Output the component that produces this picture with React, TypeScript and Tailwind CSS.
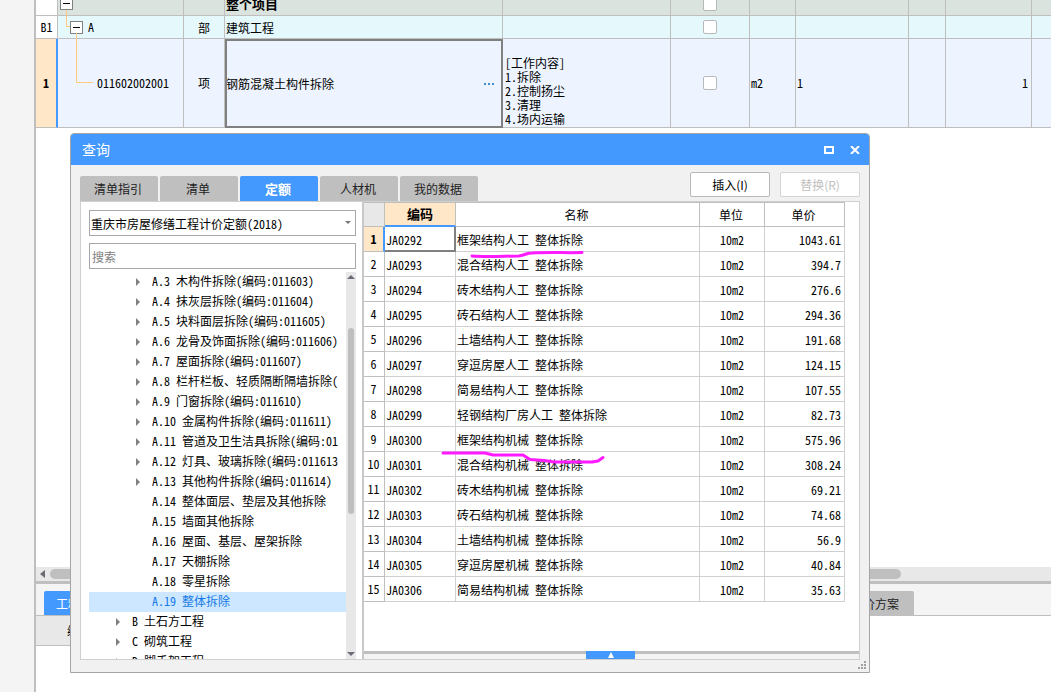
import { useState } from 'react';

interface TreeNode {
  code: string;
  name: string;
  level: number;
  leaf?: boolean;
}

interface Quota {
  code: string;
  name: string;
  unit: string;
  price: string;
}

const tabs = ['清单指引', '清单', '定额', '人材机', '我的数据'];

const treeNodes: TreeNode[] = [
  { code: 'A.3', name: '木构件拆除(编码:011603)', level: 2 },
  { code: 'A.4', name: '抹灰层拆除(编码:011604)', level: 2 },
  { code: 'A.5', name: '块料面层拆除(编码:011605)', level: 2 },
  { code: 'A.6', name: '龙骨及饰面拆除(编码:011606)', level: 2 },
  { code: 'A.7', name: '屋面拆除(编码:011607)', level: 2 },
  { code: 'A.8', name: '栏杆栏板、轻质隔断隔墙拆除(', level: 2 },
  { code: 'A.9', name: '门窗拆除(编码:011610)', level: 2 },
  { code: 'A.10', name: '金属构件拆除(编码:011611)', level: 2 },
  { code: 'A.11', name: '管道及卫生洁具拆除(编码:01', level: 2 },
  { code: 'A.12', name: '灯具、玻璃拆除(编码:011613', level: 2 },
  { code: 'A.13', name: '其他构件拆除(编码:011614)', level: 2 },
  { code: 'A.14', name: '整体面层、垫层及其他拆除', level: 2, leaf: true },
  { code: 'A.15', name: '墙面其他拆除', level: 2, leaf: true },
  { code: 'A.16', name: '屋面、基层、屋架拆除', level: 2, leaf: true },
  { code: 'A.17', name: '天棚拆除', level: 2, leaf: true },
  { code: 'A.18', name: '零星拆除', level: 2, leaf: true },
  { code: 'A.19', name: '整体拆除', level: 2, leaf: true },
  { code: 'B', name: '土石方工程', level: 1 },
  { code: 'C', name: '砌筑工程', level: 1 },
  { code: 'D', name: '脚手架工程', level: 1 },
];

const quotas: Quota[] = [
  { code: 'JA0292', name: '框架结构人工 整体拆除', unit: '10m2', price: '1043.61' },
  { code: 'JA0293', name: '混合结构人工 整体拆除', unit: '10m2', price: '394.7' },
  { code: 'JA0294', name: '砖木结构人工 整体拆除', unit: '10m2', price: '276.6' },
  { code: 'JA0295', name: '砖石结构人工 整体拆除', unit: '10m2', price: '294.36' },
  { code: 'JA0296', name: '土墙结构人工 整体拆除', unit: '10m2', price: '191.68' },
  { code: 'JA0297', name: '穿逗房屋人工 整体拆除', unit: '10m2', price: '124.15' },
  { code: 'JA0298', name: '简易结构人工 整体拆除', unit: '10m2', price: '107.55' },
  { code: 'JA0299', name: '轻钢结构厂房人工 整体拆除', unit: '10m2', price: '82.73' },
  { code: 'JA0300', name: '框架结构机械 整体拆除', unit: '10m2', price: '575.96' },
  { code: 'JA0301', name: '混合结构机械 整体拆除', unit: '10m2', price: '308.24' },
  { code: 'JA0302', name: '砖木结构机械 整体拆除', unit: '10m2', price: '69.21' },
  { code: 'JA0303', name: '砖石结构机械 整体拆除', unit: '10m2', price: '74.68' },
  { code: 'JA0304', name: '土墙结构机械 整体拆除', unit: '10m2', price: '56.9' },
  { code: 'JA0305', name: '穿逗房屋机械 整体拆除', unit: '10m2', price: '40.84' },
  { code: 'JA0306', name: '简易结构机械 整体拆除', unit: '10m2', price: '35.63' },
];

const workContent = ['[工作内容]', '1.拆除', '2.控制扬尘', '3.清理', '4.场内运输'];

const cell = 'border-r border-b border-[#bfbfbf] p-0';

const CheckBox = ({ label }: { label: string }) => (
  <input
    type="checkbox"
    aria-label={label}
    className="mx-auto block size-[14px] appearance-none rounded-xs border border-[#b8b8b8] bg-white checked:bg-[#4499ff]"
  />
);

const Toggle = () => (
  <button aria-label="折叠" className="flex size-[13px] items-center justify-center border border-[#808080] bg-white">
    <span className="h-px w-[7px] bg-black"></span>
  </button>
);

const ProjectTable = () => (
  <div className="relative overflow-hidden">
    <table className="-mt-2 w-full table-fixed border-separate border-spacing-0">
      <colgroup>
        <col className="w-[22px]" />
        <col className="w-[126px]" />
        <col className="w-[41px]" />
        <col className="w-[278px]" />
        <col className="w-[168px]" />
        <col className="w-[79px]" />
        <col className="w-[46px]" />
        <col className="w-[113px]" />
        <col className="w-[37px]" />
        <col className="w-[86px]" />
        <col />
      </colgroup>
      <tbody>
        <tr className="h-[24px] bg-[#dae3de]">
          <td className={`${cell} bg-white`}></td>
          <td className={cell}><div className="pl-[2px]"><Toggle /></div></td>
          <td className={cell}></td>
          <td className={`${cell} pt-px pl-px text-[13px] font-bold`}>整个项目</td>
          <td className={cell}></td>
          <td className={cell}><CheckBox label="整个项目" /></td>
          <td className={cell}></td>
          <td className={cell}></td>
          <td className={cell}></td>
          <td className={cell}></td>
          <td className="border-b border-[#bfbfbf]"></td>
        </tr>
        <tr className="h-[23px] bg-[#e5f8fc]">
          <td className={`${cell} bg-white text-center`}>B1</td>
          <td className={cell}><div className="flex items-center gap-[5px] pl-[12px]"><Toggle />A</div></td>
          <td className={`${cell} pt-[2px] text-center`}>部</td>
          <td className={`${cell} pt-[2px] pl-px`}>建筑工程</td>
          <td className={cell}></td>
          <td className={cell}><CheckBox label="建筑工程" /></td>
          <td className={cell}></td>
          <td className={cell}></td>
          <td className={cell}></td>
          <td className={cell}></td>
          <td className="border-b border-[#bfbfbf]"></td>
        </tr>
        <tr className="h-[89px] bg-[#edf4ff]">
          <td className="border-r-2 border-b border-r-[#4499ff] border-b-[#bfbfbf] bg-[#ffe7c7] p-0 text-center font-bold">1</td>
          <td className={`${cell} pl-[39px]`}>011602002001</td>
          <td className={`${cell} text-center`}>项</td>
          <td className="p-0 outline-2 -outline-offset-2 outline-[#808080]">
            <div className="flex items-center justify-between pr-[9px] pl-px">
              钢筋混凝土构件拆除
              <button aria-label="更多" className="flex gap-[2px]">
                <span className="size-[2px] bg-[#3d8fd1]"></span>
                <span className="size-[2px] bg-[#3d8fd1]"></span>
                <span className="size-[2px] bg-[#3d8fd1]"></span>
              </button>
            </div>
          </td>
          <td className={`${cell} pb-px pl-[2px] align-bottom leading-[14px]`}>
            {workContent.map(line => <p key={line}>{line}</p>)}
          </td>
          <td className={cell}><CheckBox label="钢筋混凝土构件拆除" /></td>
          <td className={`${cell} pl-px`}>m2</td>
          <td className={`${cell} pl-px`}>1</td>
          <td className={cell}></td>
          <td className={`${cell} pr-[3px] text-right`}>1</td>
          <td className="border-b border-[#bfbfbf]"></td>
        </tr>
      </tbody>
    </table>
    {/* connectors between tree levels */}
    <svg className="pointer-events-none absolute top-0 left-0" width="60" height="100" fill="none" stroke="#ffc97f">
      <path d="M30.5 10V26.5H34M40.5 33V82.5H57" />
    </svg>
  </div>
);

const BottomPane = () => (
  <div className="h-[125px] shrink-0">
    <div className="flex h-[14px] items-center gap-[5px] bg-[#e8e8e8] pl-1">
      <svg width="5" height="8" viewBox="0 0 5 8" fill="#6b6b72"><path d="M5 0v8L0 4z" /></svg>
      <div className="h-[10px] w-[851px] rounded-full bg-[#bfbfbf]"></div>
    </div>
    <div className="h-[35px] border-t-3 border-b border-[#bfbfbf] bg-[#f4f4f4] pt-[7px] pl-2">
      <div className="flex w-[870px] justify-between">
        <button className="h-[24px] rounded-t-xs bg-[#4499ff] px-3 pt-px text-white">工料机显示</button>
        <button className="h-[24px] rounded-t-xs bg-[#bfbfbf] px-[15px] pt-px text-[#222]">组价方案</button>
      </div>
    </div>
    <div className="flex h-[30px] w-1/2 items-center border-b border-[#bfbfbf] bg-[#e8e8e8] pl-[31px]">编码</div>
  </div>
);

const QuotaTree = () => {
  const [selected, setSelected] = useState('A.19');

  return (
    <div className="flex min-h-0 flex-1">
      <ul className="min-w-0 flex-1 overflow-hidden">
        {treeNodes.map(node => (
          <li
            key={node.code}
            onClick={() => setSelected(node.code)}
            className={`flex h-[20px] cursor-pointer items-center pr-2 ${node.level === 2 ? 'pl-[47px]' : 'pl-[27px]'} ${node.code === selected ? 'bg-[#cce7ff] text-[#1478e6]' : ''}`}
          >
            <span className="flex w-4 shrink-0">
              {!node.leaf && (
                <button aria-label="展开">
                  <svg width="4" height="8" viewBox="0 0 4 8" fill="#808080"><path d="M0 0l4 4-4 4z" /></svg>
                </button>
              )}
            </span>
            <span className="overflow-hidden pb-[2px] whitespace-pre">{node.code} {node.name}</span>
          </li>
        ))}
      </ul>
      <div className="flex w-[10px] flex-col items-center justify-between bg-[#e8e8e8] py-[3px]">
        <svg width="8" height="4" viewBox="0 0 8 4" fill="#6b6b7a"><path d="M0 4l4-4 4 4z" /></svg>
        <div className="mb-[89px] h-[186px] w-[6px] rounded-full bg-[#bfbfbf]"></div>
        <svg width="8" height="4" viewBox="0 0 8 4" fill="#6b6b7a"><path d="M0 0l4 4 4-4z" /></svg>
      </div>
    </div>
  );
};

const QuotaTable = () => {
  const head = 'border-r border-y border-[#bfbfbf] p-0 pr-[2px] font-normal';
  const body = 'border-r border-b border-[#d0d0d0] p-0 pt-[2px]';

  return (
    <table className="w-[481px] table-fixed border-separate border-spacing-0">
      <colgroup>
        <col className="w-[21px]" />
        <col className="w-[71px]" />
        <col className="w-[244px]" />
        <col className="w-[65px]" />
        <col className="w-[80px]" />
      </colgroup>
      <thead>
        <tr className="h-[25px]">
          <th className={`${head} bg-[#e8e8e8]`}></th>
          <th className="border-t border-r border-b-2 border-[#bfbfbf] border-b-[#4499ff] bg-[#ffe7c7] p-0 text-[13px] font-bold">编码</th>
          <th className={head}>名称</th>
          <th className={head}>单位</th>
          <th className={head}>单价</th>
        </tr>
      </thead>
      <tbody>
        {quotas.map((quota, index) => (
          <tr key={quota.code} className="h-[25px]">
            <td className={index === 0 ? 'border-r-2 border-b border-[#4499ff] border-b-[#bfbfbf] bg-[#ffe7c7] p-0 text-center font-bold' : 'border-r border-b border-[#bfbfbf] p-0 pr-px text-center'}>{index + 1}</td>
            <td className={index === 0 ? 'border-r-2 border-b-2 border-[#808080] p-0 pt-[2px] pl-px' : `${body} pl-px`}>{quota.code}</td>
            <td className={`${body} pl-px`}>{quota.name}</td>
            <td className={`${body} text-center`}>{quota.unit}</td>
            <td className={`${body} pr-[3px] text-right`}>{quota.price}</td>
          </tr>
        ))}
      </tbody>
    </table>
  );
};

const QueryDialog = () => {
  const [tab, setTab] = useState('定额');

  return (
    <div role="dialog" aria-label="查询" className="absolute top-[133px] left-[70px] flex h-[540px] w-[800px] flex-col rounded-t border border-[#a5a5a5] bg-[#f1f1f1]">
      <div className="flex h-[31px] shrink-0 items-center justify-between rounded-t-[3px] bg-[#4499ff] pr-[9px] pl-[11px] text-white">
        <h2 className="pb-[2px] text-sm">查询</h2>
        <div className="flex items-center gap-4">
          <button aria-label="最大化">
            <svg width="10" height="8" viewBox="0 0 10 8" fill="none" stroke="currentColor" strokeWidth="2"><path d="M1 1h8v6H1z" /></svg>
          </button>
          <button aria-label="关闭">
            <svg width="10" height="8" viewBox="0 0 10 8" fill="none" stroke="currentColor" strokeWidth="2"><path d="M1 0l8 8M9 0L1 8" /></svg>
          </button>
        </div>
      </div>

      <div className="flex h-[36px] shrink-0 items-end justify-between px-[9px]">
        <div className="flex gap-[2px]">
          {tabs.map(name => (
            <button
              key={name}
              onClick={() => setTab(name)}
              className={`h-[25px] w-[78px] rounded-t-xs pr-[2px] ${name === tab ? 'bg-[#4499ff] text-[13px] font-bold text-white' : 'bg-[#bfbfbf] text-[#222]'}`}
            >
              {name}
            </button>
          ))}
        </div>
        <div className="mb-1 flex gap-[10px] font-['Noto_Sans_CJK_SC',sans-serif]">
          <button className="h-[25px] w-[80px] rounded-xs border border-[#b8b8b8] bg-white">插入(I)</button>
          <button disabled className="h-[25px] w-[80px] rounded-xs border border-[#d4d4d4] bg-white text-[#bfbfbf]">替换(R)</button>
        </div>
      </div>

      <div className="mx-[9px] mb-3 flex min-h-0 flex-1 border border-[#cfcfcf] bg-white">
        <div className="flex w-[281px] flex-col pt-2 pr-[6px] pl-2">
          <div className="relative">
            <select aria-label="定额库" className="h-[26px] w-full appearance-none border border-[#a8a8a8] bg-white px-px pt-px">
              <option>重庆市房屋修缮工程计价定额(2018)</option>
            </select>
            <svg className="pointer-events-none absolute top-[11px] right-[5px]" width="6" height="4" viewBox="0 0 6 4" fill="#777"><path d="M0 0h6L3 3z" /></svg>
          </div>
          <input type="text" aria-label="搜索" placeholder="搜索" className="mt-[7px] mb-[3px] h-[26px] w-full shrink-0 border border-[#a8a8a8] px-[2px] placeholder:text-[#808080]" />
          <QuotaTree />
        </div>
        <div className="flex min-w-0 flex-1 flex-col justify-between border-l-2 border-[#c8c8c8]">
          <QuotaTable />
          <div className="flex h-2 justify-center border-t-3 border-[#bfbfbf] bg-[#f4f4f4] pr-[2px]">
            <button aria-label="展开详情" className="-mt-[3px] flex h-2 w-[49px] items-center justify-center bg-[#4499ff]">
              <svg width="6" height="6" viewBox="0 0 6 6" fill="white"><path d="M3 0l3 6H0z" /></svg>
            </button>
          </div>
        </div>
      </div>

      {/* resize grip */}
      <svg className="absolute right-[3px] bottom-[3px]" width="8" height="8" viewBox="0 0 8 8" fill="#a0a0a0">
        <path d="M6 0h2v2H6zM3 3h2v2H3zM6 3h2v2H6zM0 6h2v2H0zM3 6h2v2H3zM6 6h2v2H6z" />
      </svg>
      {/* pen marks over the table */}
      <svg className="pointer-events-none absolute top-[110px] left-[365px]" width="175" height="230" fill="none" stroke="#ff1aff" strokeWidth="3" strokeLinecap="round" strokeLinejoin="round">
        <path d="M36 12C50 13 70 12 83 12C90 11 90 9 96 9C115 8 130 9 146 8.500" />
        <path d="M7 209H49L57 211H87L94 215.500L108 216.500L118 218H156L162 217L167 213.500" />
      </svg>
    </div>
  );
};

export default function App() {
  return (
    <div className="relative flex h-screen overflow-hidden bg-white font-['Noto_Sans_Mono_CJK_SC','Liberation_Mono','Noto_Sans_CJK_SC',monospace] text-xs leading-4 text-black">
      <div className="w-[36px] shrink-0 border-r-2 border-[#bfbfbf] bg-[#f4f4f4]"></div>
      <div className="flex min-w-0 flex-1 flex-col">
        <ProjectTable />
        <div className="flex-1"></div>
        <BottomPane />
      </div>
      <QueryDialog />
    </div>
  );
}
